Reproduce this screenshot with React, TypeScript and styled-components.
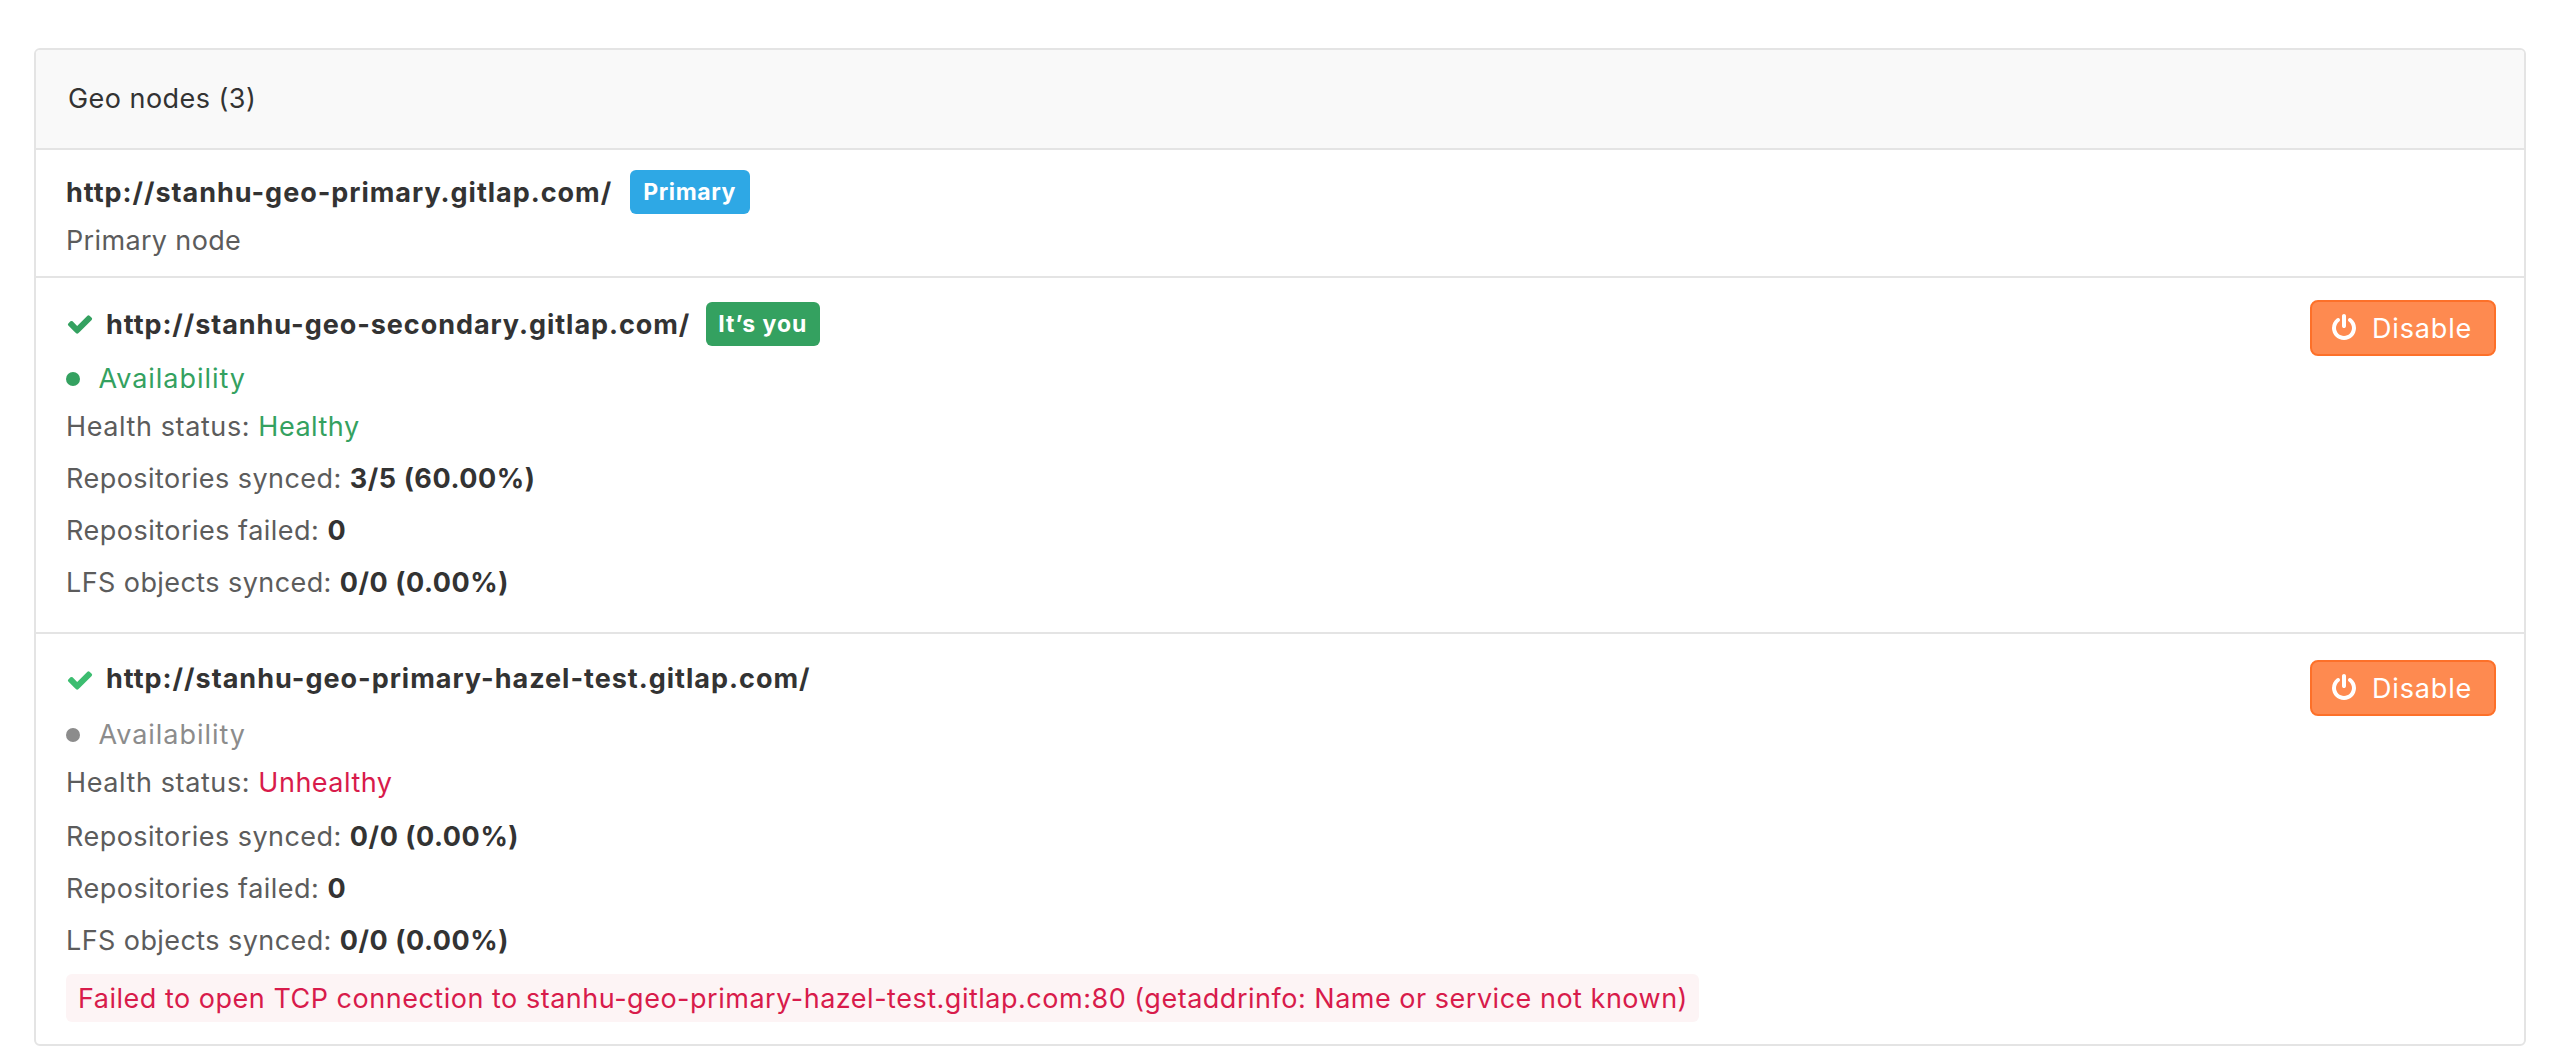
import React from "react";
import styled, { createGlobalStyle } from "styled-components";

const color = {
  text: "#333333",
  secondary: "#5c5c5c",
  muted: "#8c8c8c",
  border: "#e4e4e4",
  green: "#34a160",
  brightGreen: "#3cbd70",
  red: "#d81b4b",
  blue: "#2ea8e5",
};

const GlobalStyle = createGlobalStyle`
  body {
    margin: 0;
    background: #ffffff;
    color: ${color.text};
    font: 400 27px/37px Inter, "Liberation Sans", sans-serif;
    -webkit-font-smoothing: antialiased;
  }
`;

const Page = styled.main`
  padding: 48px 34px 14px;
`;

const Panel = styled.section`
  border: 2px solid ${color.border};
  border-radius: 6px;
  overflow: hidden;
`;

const PanelHeader = styled.header`
  padding: 30px 32px 31px;
  background: #f9f9f9;
  letter-spacing: 0.46px;
`;

const NodeList = styled.ul`
  margin: 0;
  padding: 0;
  list-style: none;
`;

const NodeRow = styled.li<{ $top: number; $bottom: number }>`
  display: flex;
  justify-content: space-between;
  align-items: flex-start;
  border-top: 2px solid ${color.border};
  padding: ${(p) => p.$top}px 28px ${(p) => p.$bottom}px 30px;
`;

const Details = styled.div`
  display: flex;
  flex-direction: column;
  align-items: flex-start;
`;

const TitleRow = styled.div`
  display: flex;
  align-items: center;
  height: 44px;
`;

const CheckSvg = styled.svg<{ $color: string; $drop: number }>`
  width: 28px;
  height: 28px;
  margin: ${(p) => p.$drop}px 12px 0 0;
  fill: ${(p) => p.$color};
`;

const NodeUrl = styled.strong<{ $tracking: number }>`
  margin-top: 1px;
  font-weight: 700;
  letter-spacing: ${(p) => p.$tracking}px;
  white-space: nowrap;
`;

const Badge = styled.span<{ $bg: string; $width: number; $gap: number; $tracking: number }>`
  box-sizing: border-box;
  width: ${(p) => p.$width}px;
  height: 44px;
  margin-left: ${(p) => p.$gap}px;
  border-radius: 6px;
  background: ${(p) => p.$bg};
  color: #ffffff;
  font-size: 23px;
  font-weight: 700;
  line-height: 44px;
  letter-spacing: ${(p) => p.$tracking}px;
  text-align: center;
`;

const Info = styled.div<{ $gap: number; $tracking?: number }>`
  margin-top: ${(p) => p.$gap}px;
  color: ${color.secondary};
  letter-spacing: ${(p) => p.$tracking ?? 0.46}px;
`;

const Availability = styled.div<{ $color: string; $gap: number }>`
  display: flex;
  align-items: center;
  gap: 18.5px;
  margin-top: ${(p) => p.$gap}px;
  color: ${(p) => p.$color};
  letter-spacing: 0.95px;
`;

const Dot = styled.i`
  width: 14px;
  height: 14px;
  margin-top: 1px;
  border-radius: 50%;
  background: currentColor;
`;

const Status = styled.span<{ $color: string }>`
  color: ${(p) => p.$color};
  letter-spacing: 0.5px;
`;

const Value = styled.strong`
  color: ${color.text};
  font-weight: 700;
  letter-spacing: 0.56px;
`;

const ErrorMessage = styled.div`
  margin-top: 15px;
  padding: 6px 11.5px 5px 12px;
  border-radius: 6px;
  background: #fdf4f5;
  color: ${color.red};
  letter-spacing: 0.51px;
`;

const DisableButton = styled.button<{ $shift: number }>`
  display: flex;
  align-items: center;
  gap: 14px;
  box-sizing: border-box;
  width: 186px;
  height: 56px;
  margin: ${(p) => p.$shift}px 0 0;
  padding: 1px 0 0 18px;
  border: 2px solid #fd7029;
  border-radius: 8px;
  background: #fe8a50;
  color: #ffffff;
  font: inherit;
  letter-spacing: 0.85px;
`;

const PowerSvg = styled.svg`
  width: 28px;
  height: 28px;
  margin-top: -1px;
  flex: none;
  fill: currentColor;
`;

const Check = ({ tone, drop = 0 }: { tone: string; drop?: number }) => (
  <CheckSvg viewBox="0 0 1792 1792" $color={tone} $drop={drop}>
    <path d="M1671 566q0 40-28 68l-724 724-136 136q-28 28-68 28t-68-28l-136-136-362-362q-28-28-28-68t28-68l136-136q28-28 68-28t68 28l294 295 656-657q28-28 68-28t68 28l136 136q28 28 28 68z" />
  </CheckSvg>
);

const Disable = ({ shift }: { shift: number }) => (
  <DisableButton type="button" $shift={shift}>
    <PowerSvg viewBox="0 0 1792 1792">
      <path d="M1664 896q0 156-61 298t-164 245-245 164-298 61-298-61-245-164-164-245-61-298q0-182 80.5-343t226.5-270q43-32 95.5-25t83.5 50q32 42 24.5 94.5t-49.5 84.5q-98 74-151.5 181t-53.5 228q0 104 40.5 198.5t109.5 163.5 163.5 109.5 198.5 40.5 198.5-40.5 163.5-109.5 109.5-163.5 40.5-198.5q0-121-53.5-228t-151.5-181q-42-32-49.5-84.5t24.5-94.5q31-43 84-50t95 25q146 109 226.5 270t80.5 343zm-640-768v640q0 52-38 90t-90 38-90-38-38-90v-640q0-52 38-90t90-38 90 38 38 90z" />
    </PowerSvg>
    Disable
  </DisableButton>
);

export default function App() {
  return (
    <>
      <GlobalStyle />
      <Page>
        <Panel>
          <PanelHeader>Geo nodes (3)</PanelHeader>
          <NodeList>
            <NodeRow $top={20} $bottom={17}>
              <Details>
                <TitleRow>
                  <NodeUrl $tracking={0.97}>http://stanhu-geo-primary.gitlap.com/</NodeUrl>
                  <Badge $bg={color.blue} $width={120} $gap={17.4} $tracking={0.6}>Primary</Badge>
                </TitleRow>
                <Info $gap={8} $tracking={0.35}>Primary node</Info>
              </Details>
            </NodeRow>
            <NodeRow $top={24} $bottom={31}>
              <Details>
                <TitleRow>
                  <Check tone={color.green} />
                  <NodeUrl $tracking={0.94}>http://stanhu-geo-secondary.gitlap.com/</NodeUrl>
                  <Badge $bg={color.green} $width={114} $gap={15.5} $tracking={1}>It’s you</Badge>
                </TitleRow>
                <Availability $color={color.green} $gap={14}><Dot />Availability</Availability>
                <Info $gap={11} $tracking={0.6}>Health status: <Status $color={color.green}>Healthy</Status></Info>
                <Info $gap={15}>Repositories synced: <Value>3/5 (60.00%)</Value></Info>
                <Info $gap={15} $tracking={0.49}>Repositories failed: <Value>0</Value></Info>
                <Info $gap={15} $tracking={0.42}>LFS objects synced: <Value>0/0 (0.00%)</Value></Info>
              </Details>
              <Disable shift={-2} />
            </NodeRow>
            <NodeRow $top={22} $bottom={22}>
              <Details>
                <TitleRow>
                  <Check tone={color.brightGreen} drop={4} />
                  <NodeUrl $tracking={0.99}>http://stanhu-geo-primary-hazel-test.gitlap.com/</NodeUrl>
                </TitleRow>
                <Availability $color={color.muted} $gap={16}><Dot />Availability</Availability>
                <Info $gap={11} $tracking={0.6}>Health status: <Status $color={color.red}>Unhealthy</Status></Info>
                <Info $gap={17}>Repositories synced: <Value>0/0 (0.00%)</Value></Info>
                <Info $gap={15} $tracking={0.49}>Repositories failed: <Value>0</Value></Info>
                <Info $gap={15} $tracking={0.42}>LFS objects synced: <Value>0/0 (0.00%)</Value></Info>
                <ErrorMessage>
                  Failed to open TCP connection to stanhu-geo-primary-hazel-test.gitlap.com:80 (getaddrinfo: Name or service not known)
                </ErrorMessage>
              </Details>
              <Disable shift={4} />
            </NodeRow>
          </NodeList>
        </Panel>
      </Page>
    </>
  );
}
